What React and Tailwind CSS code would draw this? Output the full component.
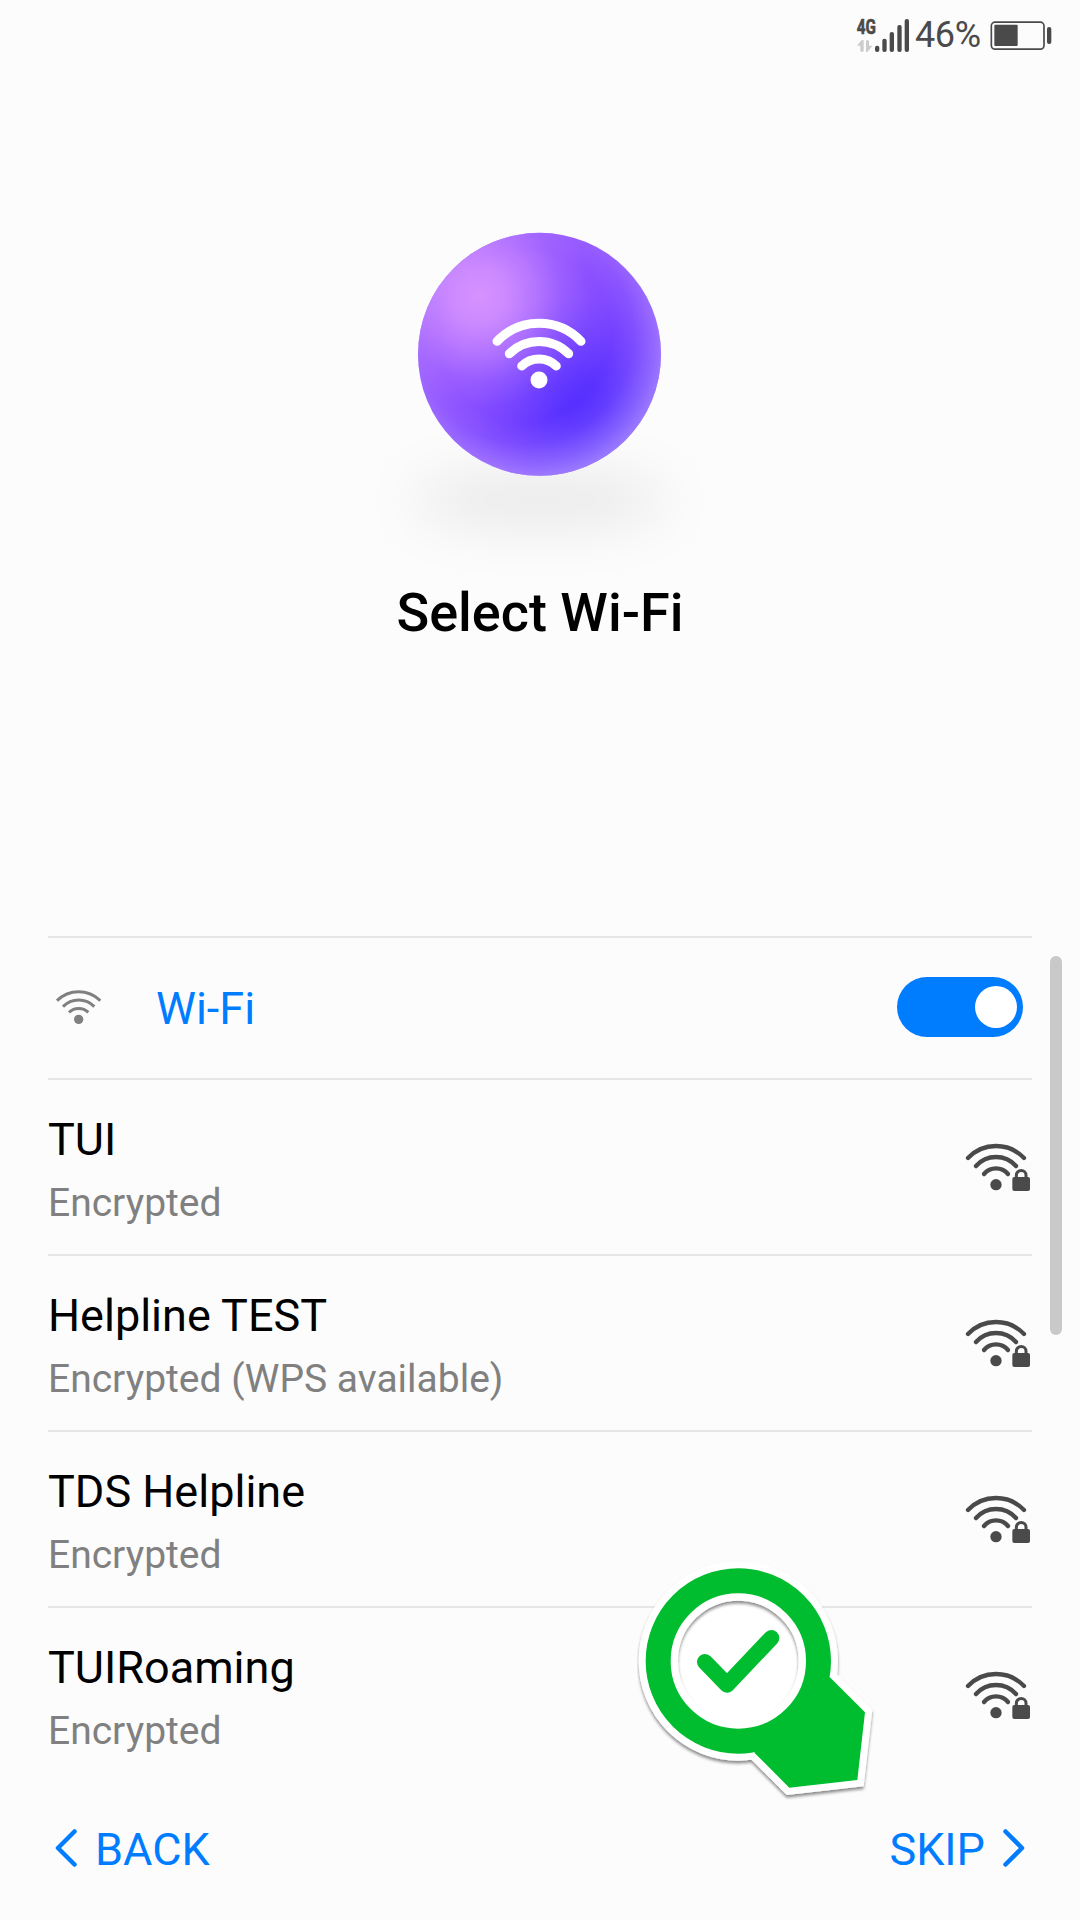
const networks = [
  { name: "TUI", detail: "Encrypted" },
  { name: "Helpline TEST", detail: "Encrypted (WPS available)" },
  { name: "TDS Helpline", detail: "Encrypted" },
  { name: "TUIRoaming", detail: "Encrypted" },
];

function StatusBar() {
  return (
    <header className="flex h-[70px] items-start justify-end pr-[27px] text-[#4a4a4a]">
      <svg className="mt-[10px] h-[44px] w-[56px] overflow-visible" viewBox="45 30 168 132" fill="currentColor">
        <text
          transform="translate(50 101) scale(0.75 1)"
          fontSize="61"
          fontWeight="700"
          fontFamily="Roboto, sans-serif"
          stroke="currentColor"
          strokeWidth="2"
        >
          4G
        </text>
        <g fill="#cccccc">
          <path d="M51 137L63 122Q66 119 71 120V153Q66 159 61 153V137Z" />
          <path d="M78 123Q82 117 87 123V137H97L85 153Q82 157 78 156Z" />
        </g>
        <rect x="105" y="137" width="13" height="19" rx="6" />
        <rect x="127" y="116" width="13" height="40" rx="6" />
        <rect x="149" y="96" width="13" height="60" rx="6" />
        <rect x="172" y="75" width="13" height="81" rx="6" />
        <rect x="194" y="57" width="13" height="99" rx="6" />
      </svg>
      <span className="mt-[14px] w-[78px] pl-[4px] text-[36px] leading-[42px] tracking-[-0.4px]">46%</span>
      <svg className="mt-[18px] h-[36px] w-[64px]" viewBox="447 54 192 108" fill="currentColor">
        <rect x="454" y="66.500" width="158" height="81" rx="11" fill="none" stroke="currentColor" strokeWidth="5" />
        <rect x="463" y="74" width="70" height="64" rx="3" />
        <rect x="621" y="81" width="13" height="51" rx="6" />
      </svg>
    </header>
  );
}

function Orb() {
  return (
    <div className="relative mt-[162px] h-[244px] w-[244px]">
      <div className="absolute top-[238px] -left-[8px] h-[60px] w-[260px] rounded-[50%] bg-black/7 blur-[26px]" />
      <svg className="relative h-[244px] w-[244px]" viewBox="418 232 244 244">
        <defs>
          <radialGradient id="depth" cx="0.67" cy="0.7" r="0.62">
            <stop offset="0" stopColor="#5630ff" />
            <stop offset="0.15" stopColor="#5630ff" stopOpacity="0.92" />
            <stop offset="0.4" stopColor="#5630ff" stopOpacity="0.58" />
            <stop offset="0.7" stopColor="#5630ff" stopOpacity="0.2" />
            <stop offset="1" stopColor="#5630ff" stopOpacity="0" />
          </radialGradient>
          <radialGradient id="glow" cx="0.25" cy="0.26" r="0.58">
            <stop offset="0" stopColor="#d592ff" />
            <stop offset="0.2" stopColor="#d592ff" stopOpacity="0.88" />
            <stop offset="0.4" stopColor="#d592ff" stopOpacity="0.6" />
            <stop offset="0.6" stopColor="#d592ff" stopOpacity="0.28" />
            <stop offset="0.8" stopColor="#d592ff" stopOpacity="0.08" />
            <stop offset="1" stopColor="#d592ff" stopOpacity="0" />
          </radialGradient>
          <radialGradient id="rim" cx="0.44" cy="0.42" r="0.64">
            <stop offset="0.56" stopColor="#ffffff" stopOpacity="0" />
            <stop offset="0.7" stopColor="#ffffff" stopOpacity="0.06" />
            <stop offset="0.84" stopColor="#ffffff" stopOpacity="0.2" />
            <stop offset="1" stopColor="#ffffff" stopOpacity="0.4" />
          </radialGradient>
        </defs>
        <circle cx="539.500" cy="354.300" r="121.500" fill="#8a4dff" />
        <circle cx="539.500" cy="354.300" r="121.500" fill="url(#depth)" />
        <circle cx="539.500" cy="354.300" r="121.500" fill="url(#glow)" />
        <circle cx="539.500" cy="354.300" r="121.500" fill="url(#rim)" />
        <g fill="none" stroke="#ffffff" strokeWidth="9" strokeLinecap="round">
          <path d="M497 341.300A58 58 0 0 1 581 341.300" />
          <path d="M509.300 353.700A42 42 0 0 1 568.700 353.700" />
          <path d="M521.700 366A25 25 0 0 1 556.300 366" />
        </g>
        <circle cx="539" cy="380" r="8.500" fill="#ffffff" />
      </svg>
    </div>
  );
}

function WifiIcon() {
  return (
    <svg className="h-[36px] w-[46px]" viewBox="75 207 138 108" fill="none" stroke="#808080" strokeWidth="9">
      <path d="M81 242A92 92 0 0 1 211 242" />
      <path d="M99 260A66 66 0 0 1 193 260" />
      <path d="M117 277A42 42 0 0 1 175 277" />
      <circle cx="146" cy="298" r="14" fill="#808080" stroke="none" />
    </svg>
  );
}

function LockedWifiIcon() {
  return (
    <svg className="mt-[62px] mr-[1px] h-[50px] w-[66px] shrink-0" viewBox="315 666 198 150" fill="none" stroke="#4a4a4a" strokeWidth="13" strokeLinecap="round">
      <path d="M324 714A116 116 0 0 1 492 714" />
      <path d="M348 738A80 80 0 0 1 468 738" />
      <path d="M372 762A47 47 0 0 1 444 762" />
      <circle cx="408" cy="794" r="17" fill="#4a4a4a" stroke="none" />
      <rect x="457" y="771" width="53" height="42" rx="6" fill="#4a4a4a" stroke="none" />
      <path d="M469 773V766A14.500 14.500 0 0 1 498 766V773" strokeWidth="9" strokeLinecap="butt" />
    </svg>
  );
}

function NetworkRow({ name, detail }) {
  return (
    <li className="flex h-[176px] items-start justify-between border-t-2 border-[#e6e6e6]">
      <div className="pt-[32px]">
        <div className="text-[45px] leading-[56px] text-black">{name}</div>
        <div className="mt-[11px] text-[39px] leading-[48px] text-[#808080]">{detail}</div>
      </div>
      <LockedWifiIcon />
    </li>
  );
}

/* Magnifier-shaped marker with a check mark, floating above the list. */
function Marker() {
  return (
    <svg className="absolute top-[1550px] left-[620px] h-[260px] w-[270px]" viewBox="0 0 810 780">
      <defs>
        <filter id="markerShadow" x="-10%" y="-10%" width="120%" height="120%">
          <feDropShadow dx="0" dy="8" stdDeviation="5" floodColor="#000000" floodOpacity="0.45" />
        </filter>
      </defs>
      <circle cx="355" cy="333" r="185" fill="#ffffff" />
      <g filter="url(#markerShadow)">
        <circle cx="355" cy="333" r="240" fill="none" stroke="#ffffff" strokeWidth="118" />
        <path d="M629 381L735 487L712 690L508 713L403 608L545 485Z" fill="#ffffff" stroke="#ffffff" strokeWidth="42" />
      </g>
      <circle cx="355" cy="333" r="240.500" fill="none" stroke="#00bd2f" strokeWidth="75" />
      <path d="M629 381L735 487L712 690L508 713L403 608L530 505Z" fill="#00bd2f" />
      <path d="M255 336L321 404L454 264" fill="none" stroke="#00bd2f" strokeWidth="48" strokeLinecap="round" strokeLinejoin="round" />
    </svg>
  );
}

export default function App() {
  return (
    <div className="relative flex h-[1920px] w-[1080px] flex-col overflow-hidden bg-[#fcfcfc] font-['Roboto',sans-serif]">
      <StatusBar />
      <section className="flex h-[866px] flex-col items-center">
        <Orb />
        <h1 className="mt-[105px] text-[54px] leading-[64px] font-medium text-black">Select Wi-Fi</h1>
      </section>
      <main className="flex h-[854px]">
        <div className="ml-[48px] w-[984px]">
          <div className="flex h-[142px] items-center border-t-2 border-[#e6e6e6] pr-[9px] pb-[2px] pl-[7px]">
            <WifiIcon />
            <span className="mt-[4px] ml-[55px] flex-1 text-[45px] leading-[56px] text-[#007dff]">Wi-Fi</span>
            <div className="flex h-[60px] w-[126px] items-center justify-end rounded-full bg-[#007dff] pr-[6px]">
              <div className="h-[42px] w-[42px] rounded-full bg-white" />
            </div>
          </div>
          <ul>
            {networks.map((network) => (
              <NetworkRow key={network.name} name={network.name} detail={network.detail} />
            ))}
          </ul>
        </div>
        <div className="mt-[20px] ml-[18px] h-[379px] w-[12px] rounded-full bg-[#c9c9c9]" />
      </main>
      <footer className="flex justify-between pt-[32px] pr-[55px] pl-[55px] text-[45px] leading-[56px] text-[#007dff]">
        <button className="flex items-center">
          <svg className="mb-[4px] h-[40px] w-[22px]" viewBox="0 0 22 40" fill="none" stroke="currentColor" strokeWidth="4.500" strokeLinecap="round" strokeLinejoin="round">
            <path d="M19.500 3.500L3 20L19.500 36.500" />
          </svg>
          <span className="ml-[18px]">BACK</span>
        </button>
        <button className="flex items-center">
          <span className="mr-[18px]">SKIP</span>
          <svg className="mb-[4px] h-[40px] w-[22px]" viewBox="0 0 22 40" fill="none" stroke="currentColor" strokeWidth="4.500" strokeLinecap="round" strokeLinejoin="round">
            <path d="M2.500 3.500L19 20L2.500 36.500" />
          </svg>
        </button>
      </footer>
      <Marker />
    </div>
  );
}
